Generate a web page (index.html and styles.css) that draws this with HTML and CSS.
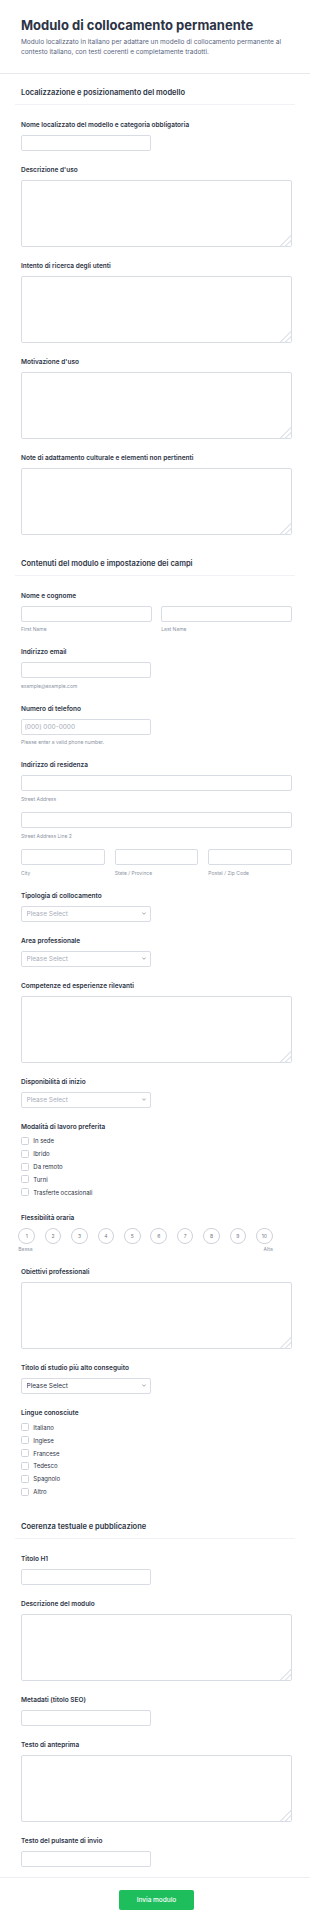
FILE: index.html
```html
<!DOCTYPE html>
<html lang="it">
<head>
<meta charset="utf-8">
<title>Modulo di collocamento permanente</title>
<link rel="stylesheet" href="styles.css">
</head>
<body>
<form class="form">
  <header class="form-header">
    <h1 class="form-title">Modulo di collocamento permanente</h1>
    <p class="form-desc">Modulo localizzato in italiano per adattare un modello di collocamento permanente al contesto italiano, con testi coerenti e completamente tradotti.</p>
  </header>

  <section class="section">
    <h2 class="section-title">Localizzazione e posizionamento del modello</h2>
    <div class="fields">
      <div class="field">
        <label class="label">Nome localizzato del modello e categoria obbligatoria</label>
        <input class="input half" type="text">
      </div>
      <div class="field">
        <label class="label">Descrizione d'uso</label>
        <textarea class="textarea"></textarea>
      </div>
      <div class="field">
        <label class="label">Intento di ricerca degli utenti</label>
        <textarea class="textarea"></textarea>
      </div>
      <div class="field">
        <label class="label">Motivazione d'uso</label>
        <textarea class="textarea"></textarea>
      </div>
      <div class="field">
        <label class="label">Note di adattamento culturale e elementi non pertinenti</label>
        <textarea class="textarea"></textarea>
      </div>
    </div>
  </section>

  <section class="section">
    <h2 class="section-title">Contenuti del modulo e impostazione dei campi</h2>
    <div class="fields">
      <div class="field">
        <label class="label">Nome e cognome</label>
        <div class="row row-2">
          <div class="col"><input class="input" type="text"><span class="sub">First Name</span></div>
          <div class="col"><input class="input" type="text"><span class="sub">Last Name</span></div>
        </div>
      </div>
      <div class="field">
        <label class="label">Indirizzo email</label>
        <input class="input half" type="email">
        <span class="sub">example@example.com</span>
      </div>
      <div class="field">
        <label class="label">Numero di telefono</label>
        <input class="input half" type="tel" placeholder="(000) 000-0000">
        <span class="sub">Please enter a valid phone number.</span>
      </div>
      <div class="field">
        <label class="label">Indirizzo di residenza</label>
        <div class="addr">
          <div class="col"><input class="input" type="text"><span class="sub">Street Address</span></div>
          <div class="col"><input class="input" type="text"><span class="sub">Street Address Line 2</span></div>
          <div class="row row-3">
            <div class="col"><input class="input" type="text"><span class="sub">City</span></div>
            <div class="col"><input class="input" type="text"><span class="sub">State / Province</span></div>
            <div class="col"><input class="input" type="text"><span class="sub">Postal / Zip Code</span></div>
          </div>
        </div>
      </div>
      <div class="field">
        <label class="label">Tipologia di collocamento</label>
        <div class="select-wrap">
          <select class="select"><option>Please Select</option></select>
          <svg class="chev" viewBox="0 0 8 5" aria-hidden="true"><path d="M1 1l3 3 3-3" fill="none" stroke="#6b7384" stroke-width="1.3" stroke-linecap="round" stroke-linejoin="round"/></svg>
        </div>
      </div>
      <div class="field">
        <label class="label">Area professionale</label>
        <div class="select-wrap">
          <select class="select"><option>Please Select</option></select>
          <svg class="chev" viewBox="0 0 8 5" aria-hidden="true"><path d="M1 1l3 3 3-3" fill="none" stroke="#6b7384" stroke-width="1.3" stroke-linecap="round" stroke-linejoin="round"/></svg>
        </div>
      </div>
      <div class="field">
        <label class="label">Competenze ed esperienze rilevanti</label>
        <textarea class="textarea"></textarea>
      </div>
      <div class="field">
        <label class="label">Disponibilità di inizio</label>
        <div class="select-wrap">
          <select class="select"><option>Please Select</option></select>
          <svg class="chev" viewBox="0 0 8 5" aria-hidden="true"><path d="M1 1l3 3 3-3" fill="none" stroke="#6b7384" stroke-width="1.3" stroke-linecap="round" stroke-linejoin="round"/></svg>
        </div>
      </div>
      <div class="field">
        <label class="label">Modalità di lavoro preferita</label>
        <div class="checks">
          <label class="check"><input class="box" type="checkbox"><span>In sede</span></label>
          <label class="check"><input class="box" type="checkbox"><span>Ibrido</span></label>
          <label class="check"><input class="box" type="checkbox"><span>Da remoto</span></label>
          <label class="check"><input class="box" type="checkbox"><span>Turni</span></label>
          <label class="check"><input class="box" type="checkbox"><span>Trasferte occasionali</span></label>
        </div>
      </div>
      <div class="field">
        <label class="label">Flessibilità oraria</label>
        <div class="rating">
          <div class="circles">
            <span class="circle">1</span><span class="circle">2</span><span class="circle">3</span><span class="circle">4</span><span class="circle">5</span><span class="circle">6</span><span class="circle">7</span><span class="circle">8</span><span class="circle">9</span><span class="circle">10</span>
          </div>
          <div class="scale"><span>Bassa</span><span>Alta</span></div>
        </div>
      </div>
      <div class="field">
        <label class="label">Obiettivi professionali</label>
        <textarea class="textarea"></textarea>
      </div>
      <div class="field">
        <label class="label">Titolo di studio più alto conseguito</label>
        <div class="select-wrap">
          <select class="select filled"><option>Please Select</option></select>
          <svg class="chev" viewBox="0 0 8 5" aria-hidden="true"><path d="M1 1l3 3 3-3" fill="none" stroke="#6b7384" stroke-width="1.3" stroke-linecap="round" stroke-linejoin="round"/></svg>
        </div>
      </div>
      <div class="field">
        <label class="label">Lingue conosciute</label>
        <div class="checks">
          <label class="check"><input class="box" type="checkbox"><span>Italiano</span></label>
          <label class="check"><input class="box" type="checkbox"><span>Inglese</span></label>
          <label class="check"><input class="box" type="checkbox"><span>Francese</span></label>
          <label class="check"><input class="box" type="checkbox"><span>Tedesco</span></label>
          <label class="check"><input class="box" type="checkbox"><span>Spagnolo</span></label>
          <label class="check"><input class="box" type="checkbox"><span>Altro</span></label>
        </div>
      </div>
    </div>
  </section>

  <section class="section">
    <h2 class="section-title">Coerenza testuale e pubblicazione</h2>
    <div class="fields">
      <div class="field">
        <label class="label">Titolo H1</label>
        <input class="input half" type="text">
      </div>
      <div class="field">
        <label class="label">Descrizione del modulo</label>
        <textarea class="textarea"></textarea>
      </div>
      <div class="field">
        <label class="label">Metadati (titolo SEO)</label>
        <input class="input half" type="text">
      </div>
      <div class="field">
        <label class="label">Testo di anteprima</label>
        <textarea class="textarea"></textarea>
      </div>
      <div class="field">
        <label class="label">Testo del pulsante di invio</label>
        <input class="input half" type="text">
      </div>
    </div>
  </section>

  <footer class="form-footer">
    <button class="submit" type="submit">Invia modulo</button>
  </footer>
</form>
</body>
</html>
```

FILE: styles.css
```css
* {
  box-sizing: border-box;
}

body {
  margin: 0;
  background: #ffffff;
  font-family: Inter, "Noto Sans", sans-serif;
  color: #2c3345;
}

.form {
  margin: 0;
}

.form-header {
  padding: 17px 21px 16px;
  border-bottom: 1px solid #e6e8ed;
}

.form-title {
  margin: 0 0 3px;
  font-size: 13px;
  line-height: 17px;
  font-weight: 700;
  color: #2c3345;
}

.form-desc {
  margin: 0;
  font-size: 6.5px;
  line-height: 10px;
  color: #57647e;
}

.section {
  padding: 14px 0 3px;
}

.section-title {
  margin: 0 15px;
  padding: 0 6px 6px;
  font-size: 7.5px;
  line-height: 10px;
  font-weight: 600;
  color: #2c3345;
  border-bottom: 1px solid #f1f2f5;
}

.fields {
  padding: 8px 18px 0 21px;
}

.field {
  display: flex;
  flex-direction: column;
  align-items: flex-start;
  padding: 7.5px 0;
}

.label {
  display: block;
  margin-bottom: 6px;
  font-size: 6.5px;
  line-height: 8px;
  font-weight: 600;
  color: #2c3345;
}

.input {
  display: block;
  width: 100%;
  height: 16px;
  margin: 0;
  padding: 0 2.5px;
  border: 1px solid #d8dce4;
  border-radius: 2px;
  background: #fff;
  font-family: inherit;
  font-size: 6.5px;
  color: #2c3345;
  outline: none;
}

.input::placeholder {
  color: #a6adba;
}

.half {
  width: 130px;
}

.textarea {
  display: block;
  width: 100%;
  height: 67px;
  margin: 0;
  padding: 3px;
  border: 1px solid #d8dce4;
  border-radius: 2px;
  background: #fff;
  font-family: inherit;
  font-size: 6.5px;
  resize: vertical;
  outline: none;
}

.textarea::-webkit-resizer {
  background: linear-gradient(135deg, #ffffff 0 62%, #e4e7ec 62% 67%, #ffffff 67% 80%, #e4e7ec 80% 85%, #ffffff 85%);
}

.sub {
  display: block;
  margin-top: 4.5px;
  font-size: 5px;
  line-height: 7px;
  color: #8d95a5;
}

.row {
  display: flex;
  width: 100%;
}

.row-2 {
  gap: 9.6px;
}

.row-3 {
  gap: 10px;
}

.col {
  flex: 1 1 0;
  min-width: 0;
}

.addr {
  width: 100%;
  display: flex;
  flex-direction: column;
  gap: 9.5px;
}

.select-wrap {
  position: relative;
  width: 130px;
}

.select {
  display: block;
  width: 100%;
  height: 16px;
  margin: 0;
  padding: 0 10px 0 4.5px;
  appearance: none;
  -webkit-appearance: none;
  border: 1px solid #d8dce4;
  border-radius: 2px;
  background: #fff;
  font-family: inherit;
  font-size: 6.5px;
  color: #a6adba;
  outline: none;
}

.select.filled {
  color: #2c3345;
}

.chev {
  position: absolute;
  right: 5px;
  top: 6.5px;
  width: 4px;
  height: 3px;
}

.checks {
  margin-top: -2px;
  display: flex;
  flex-direction: column;
}

.check {
  display: flex;
  align-items: center;
  gap: 4.3px;
  height: 12.85px;
  font-size: 6px;
  color: #2c3345;
}

.box {
  appearance: none;
  -webkit-appearance: none;
  width: 8px;
  height: 8px;
  margin: 0;
  border: 1px solid #cdd2db;
  border-radius: 1.5px;
  background: #fff;
}

.rating {
  width: 254.4px;
  margin-left: -2.7px;
}

.circles {
  display: flex;
  justify-content: space-between;
}

.circle {
  display: flex;
  align-items: center;
  justify-content: center;
  width: 16.7px;
  height: 16.7px;
  border: 1px solid #cdd2db;
  border-radius: 50%;
  font-size: 5px;
  color: #6f7888;
}

.scale {
  display: flex;
  justify-content: space-between;
  margin-top: 1.5px;
  font-size: 5px;
  line-height: 7px;
  color: #8d95a5;
}

.form-footer {
  display: flex;
  justify-content: center;
  padding: 12px 0 16.5px 3px;
  border-top: 1px solid #eceef2;
}

.submit {
  width: 74.4px;
  height: 19.3px;
  margin: 0;
  padding: 0;
  border: none;
  border-radius: 2px;
  background: #1ebe5c;
  color: #ffffff;
  font-family: inherit;
  font-size: 6.5px;
  font-weight: 500;
}
```
